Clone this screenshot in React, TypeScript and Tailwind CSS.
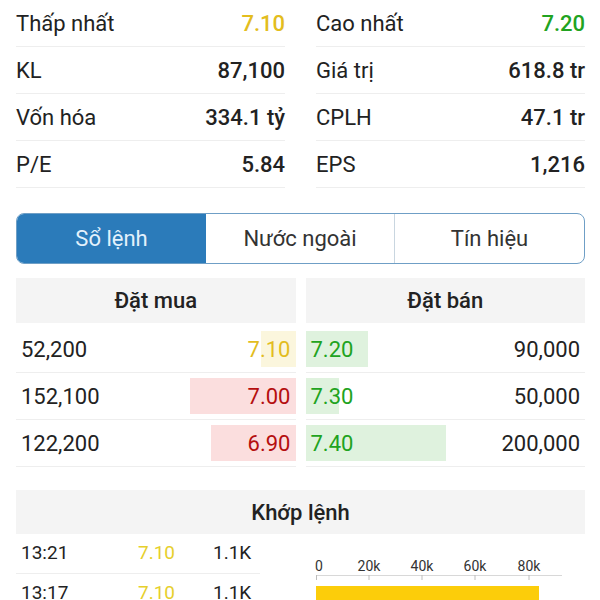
import React from "react";

interface Stat {
  label: string;
  value: string;
  color?: string;
}

interface Level {
  price: string;
  qty: string;
  bar: number;
  color: string;
  bg: string;
}

const leftStats: Stat[] = [
  { label: "Thấp nhất", value: "7.10", color: "text-[#e3bd1e]" },
  { label: "KL", value: "87,100" },
  { label: "Vốn hóa", value: "334.1 tỷ" },
  { label: "P/E", value: "5.84" },
];

const rightStats: Stat[] = [
  { label: "Cao nhất", value: "7.20", color: "text-[#21a321]" },
  { label: "Giá trị", value: "618.8 tr" },
  { label: "CPLH", value: "47.1 tr" },
  { label: "EPS", value: "1,216" },
];

const buys: Level[] = [
  { price: "7.10", qty: "52,200", bar: 35, color: "text-[#e3bd1e]", bg: "bg-[#fbf6dd]" },
  { price: "7.00", qty: "152,100", bar: 106, color: "text-[#b50f0f]", bg: "bg-[#fbdede]" },
  { price: "6.90", qty: "122,200", bar: 85, color: "text-[#b50f0f]", bg: "bg-[#fbdede]" },
];

const sells: Level[] = [
  { price: "7.20", qty: "90,000", bar: 62, color: "text-[#21a321]", bg: "bg-[#dff2de]" },
  { price: "7.30", qty: "50,000", bar: 33, color: "text-[#21a321]", bg: "bg-[#dff2de]" },
  { price: "7.40", qty: "200,000", bar: 140, color: "text-[#21a321]", bg: "bg-[#dff2de]" },
];

const trades = [
  { time: "13:21", price: "7.10", vol: "1.1K" },
  { time: "13:17", price: "7.10", vol: "1.1K" },
];

const StatColumn: React.FC<{ stats: Stat[] }> = ({ stats }) => (
  <div className="flex flex-col">
    {stats.map((s) => (
      <div
        key={s.label}
        className="h-[47px] flex items-center justify-between border-b border-[#eeeeee] text-[22px]"
      >
        <span>{s.label}</span>
        <span className={`font-medium ${s.color ?? "text-[#222]"}`}>{s.value}</span>
      </div>
    ))}
  </div>
);

const App: React.FC = () => {
  return (
    <div className="w-[600px] h-[600px] overflow-hidden bg-white font-['Roboto','Liberation_Sans',sans-serif] text-[#222]">
      <div className="pl-4 pr-[15px]">
        {/* Stats */}
        <div className="grid grid-cols-2 gap-x-[31px]">
          <StatColumn stats={leftStats} />
          <StatColumn stats={rightStats} />
        </div>

        {/* Tabs */}
        <div className="mt-[25px] h-[51px] flex rounded-[8px] border border-[#6f9fc6] overflow-hidden text-[22px]">
          <div className="w-[189px] flex items-center justify-center bg-[#2b7bba] text-[#e3f1fc]">Sổ lệnh</div>
          <div className="w-[189px] flex items-center justify-center border-r border-[#c9d6e0] text-[#333]">Nước ngoài</div>
          <div className="flex-1 flex items-center justify-center text-[#333]">Tín hiệu</div>
        </div>

        {/* Order book */}
        <div className="mt-[14px] grid grid-cols-2 gap-x-[10px]">
          <div>
            <div className="h-[45px] flex items-center justify-center bg-[#f4f4f4] text-[22px] font-medium">Đặt mua</div>
            <div className="mt-[3px]">
              {buys.map((b) => (
                <div key={b.price} className="relative h-[47px] flex items-center justify-between px-[5px] border-b border-[#eeeeee] text-[22px]">
                  <div className={`absolute right-0 top-[5px] h-[36px] ${b.bg}`} style={{ width: b.bar }} />
                  <span className="relative">{b.qty}</span>
                  <span className={`relative ${b.color}`}>{b.price}</span>
                </div>
              ))}
            </div>
          </div>
          <div>
            <div className="h-[45px] flex items-center justify-center bg-[#f4f4f4] text-[22px] font-medium">Đặt bán</div>
            <div className="mt-[3px]">
              {sells.map((s) => (
                <div key={s.price} className="relative h-[47px] flex items-center justify-between px-[5px] border-b border-[#eeeeee] text-[22px]">
                  <div className={`absolute left-0 top-[5px] h-[36px] ${s.bg}`} style={{ width: s.bar }} />
                  <span className={`relative ${s.color}`}>{s.price}</span>
                  <span className="relative">{s.qty}</span>
                </div>
              ))}
            </div>
          </div>
        </div>

        {/* Matched orders */}
        <div className="mt-[23px] h-[44px] flex items-center justify-center bg-[#f4f4f4] text-[22px] font-medium">Khớp lệnh</div>
        <div className="flex">
          <div className="w-[244px]">
            {trades.map((t, i) => (
              <div key={i} className="h-[40px] flex items-center border-b border-[#eeeeee] px-[5px] text-[19px]">
                <span className="w-[117px]">{t.time}</span>
                <span className="w-[75px] text-[#e6cf2c]">{t.price}</span>
                <span>{t.vol}</span>
              </div>
            ))}
          </div>
          <div className="ml-[56px] w-[248px] pt-[23px]">
            <svg width="248" height="60" className="block overflow-visible">
              <g fontFamily="Roboto, sans-serif" fontSize="14" fill="#333" textAnchor="middle">
                <text x="3" y="14">0</text>
                <text x="53" y="14">20k</text>
                <text x="106" y="14">40k</text>
                <text x="159" y="14">60k</text>
                <text x="213" y="14">80k</text>
              </g>
              <line x1="0" y1="18.5" x2="246" y2="18.5" stroke="#d8d8d8" />
              {[0.5, 53, 106, 159, 213].map((x) => (
                <line key={x} x1={x} y1="18" x2={x} y2="23" stroke="#bdbdbd" />
              ))}
              <rect x="0" y="29" width="223" height="30" fill="#fccd0a" />
            </svg>
          </div>
        </div>
      </div>
    </div>
  );
};

export default App;
